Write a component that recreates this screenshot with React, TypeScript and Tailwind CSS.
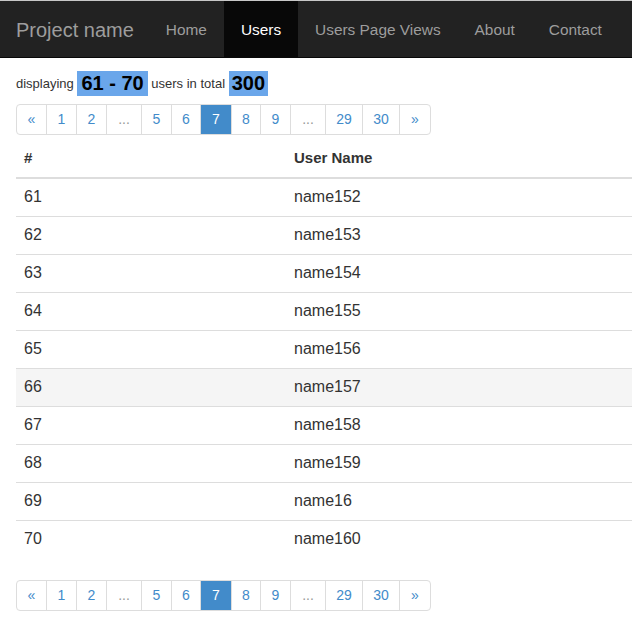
import React from "react";

const navLinks = ["Home", "Users", "Users Page Views", "About", "Contact"];

const users = [
  { id: 61, name: "name152" },
  { id: 62, name: "name153" },
  { id: 63, name: "name154" },
  { id: 64, name: "name155" },
  { id: 65, name: "name156" },
  { id: 66, name: "name157" },
  { id: 67, name: "name158" },
  { id: 68, name: "name159" },
  { id: 69, name: "name16" },
  { id: 70, name: "name160" },
];

type PageItem = { label: string; width: string; active?: boolean; disabled?: boolean };

const pages: PageItem[] = [
  { label: "«", width: "w-[31px]" },
  { label: "1", width: "w-[31px]" },
  { label: "2", width: "w-[31px]" },
  { label: "...", width: "w-[36px]", disabled: true },
  { label: "5", width: "w-[31px]" },
  { label: "6", width: "w-[30px]" },
  { label: "7", width: "w-[32px]", active: true },
  { label: "8", width: "w-[30px]" },
  { label: "9", width: "w-[31px]" },
  { label: "...", width: "w-[36px]", disabled: true },
  { label: "29", width: "w-[38px]" },
  { label: "30", width: "w-[38px]" },
  { label: "»", width: "w-[32px]" },
];

function Pagination() {
  return (
    <ul className="flex">
      {pages.map((p, idx) => (
        <li
          key={idx}
          className={`${p.width} h-[31px] flex items-center justify-center border border-[#ddd] text-[14px] ${
            idx > 0 ? "-ml-px" : "rounded-l-[4px]"
          } ${idx === pages.length - 1 ? "rounded-r-[4px]" : ""} ${
            p.active
              ? "bg-[#428bca] border-[#428bca] text-white relative z-10"
              : p.disabled
              ? "text-[#999]"
              : "text-[#428bca]"
          }`}
        >
          {p.label}
        </li>
      ))}
    </ul>
  );
}

export default function App() {
  return (
    <div className="min-h-[626px] bg-white text-[#333]" style={{ fontFamily: '"Liberation Sans", Arial, sans-serif' }}>
      <nav className="border-t border-[#c8c8c8] border-b border-b-[#080808] bg-[#222] h-[58px] flex items-stretch">
        <div className="pl-4 pr-[15px] pt-[2px] flex items-center text-[20px] text-[#9d9d9d]">Project name</div>
        <ul className="flex">
          {navLinks.map((l) => (
            <li
              key={l}
              className={`flex items-center pt-[2px] text-[15.4px] h-[56px] px-[17px] ${
                l === "Users" ? "bg-[#080808] text-white" : "text-[#9d9d9d]"
              }`}
            >
              {l}
            </li>
          ))}
        </ul>
      </nav>

      <div className="pl-4">
        <div className="mt-[13px] flex items-center text-[13px] leading-[25px]">
          <span>displaying&nbsp;</span>
          <span className="bg-[#6aa6ea] text-black font-bold text-[20px] px-1">61 - 70</span>
          <span>&nbsp;users in total&nbsp;</span>
          <span className="bg-[#6aa6ea] text-black font-bold text-[20px] px-[3px]">300</span>
        </div>

        <div className="mt-[8px]">
          <Pagination />
        </div>

        <table className="w-full mt-[5px] border-collapse">
          <thead>
            <tr className="border-b-2 border-[#ddd]">
              <th className="w-[270px] text-left font-bold text-[15px] px-2 h-[38px] align-middle">#</th>
              <th className="text-left font-bold text-[15px] px-2 align-middle">User Name</th>
            </tr>
          </thead>
          <tbody>
            {users.map((u, idx) => (
              <tr
                key={u.id}
                className={`${idx > 0 ? "border-t border-[#ddd]" : ""} ${u.id === 66 ? "bg-[#f5f5f5]" : ""}`}
              >
                <td className="px-2 h-[38px] text-[16px] align-middle">{u.id}</td>
                <td className="px-2 text-[16px] align-middle">{u.name}</td>
              </tr>
            ))}
          </tbody>
        </table>

        <div className="mt-[22px]">
          <Pagination />
        </div>
      </div>
    </div>
  );
}
